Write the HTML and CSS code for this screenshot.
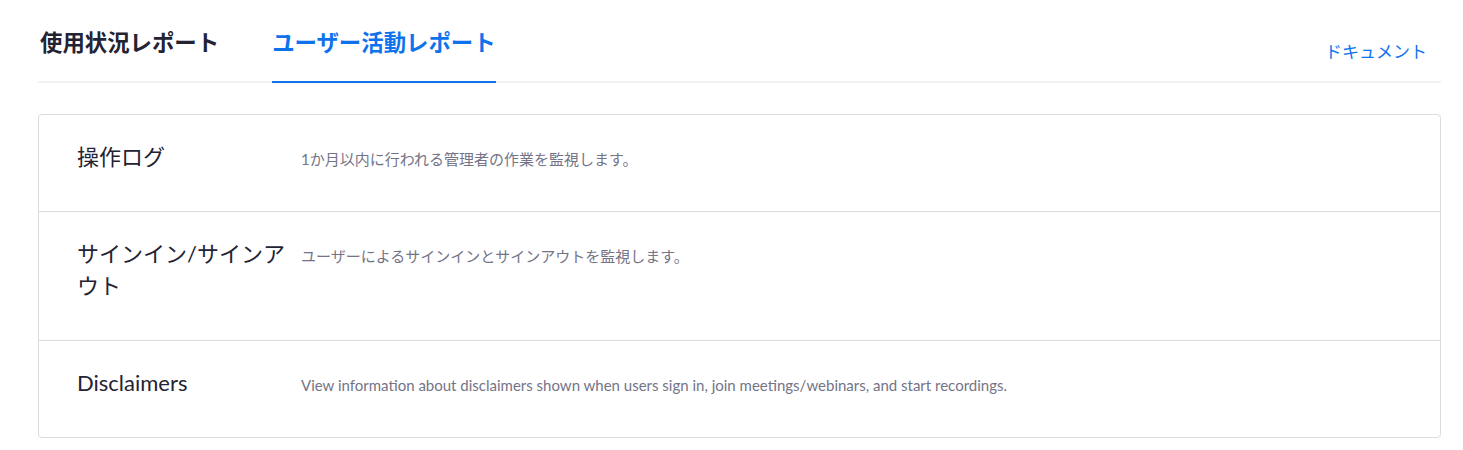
FILE: index.html
```html
<!DOCTYPE html>
<html>
<head>
    <title>ユーザー活動レポート</title>
    <link rel="stylesheet" href="styles.css">
</head>
<body>
    <div class="page">
        <div class="header">
            <div class="tabs">
                <a class="tab">使用状況レポート</a>
                <a class="tab active">ユーザー活動レポート</a>
            </div>
            <a class="doc-link">ドキュメント</a>
        </div>

        <div class="report-list">
            <div class="report-row">
                <div class="report-title">操作ログ</div>
                <div class="report-desc">1か月以内に行われる管理者の作業を監視します。</div>
            </div>
            <div class="report-row">
                <div class="report-title">サインイン/サインアウト</div>
                <div class="report-desc">ユーザーによるサインインとサインアウトを監視します。</div>
            </div>
            <div class="report-row">
                <div class="report-title">Disclaimers</div>
                <div class="report-desc">View information about disclaimers shown when users sign in, join meetings/webinars, and start recordings.</div>
            </div>
        </div>
    </div>
</body>
</html>
```

FILE: styles.css
```css
body {
    margin: 0;
    font-family: Lato, "Noto Sans CJK JP", sans-serif;
    background-color: #ffffff;
    color: #232333;
}
.page {
    padding: 0 22px 0 38px;
}
.header {
    display: flex;
    justify-content: space-between;
    align-items: flex-start;
    height: 81px;
    border-bottom: 2px solid #f2f2f2;
}
.tabs {
    display: flex;
    gap: 53px;
    padding-left: 2px;
}
.tab {
    display: block;
    padding: 27px 0 22px;
    font-size: 22.4px;
    line-height: 32px;
    font-weight: bold;
    color: #232333;
    border-bottom: 2px solid transparent;
    cursor: pointer;
}
.tab.active {
    color: #0e72ed;
    border-bottom-color: #0e72ed;
}
.doc-link {
    margin: 40px 14px 0 0;
    font-size: 17px;
    line-height: 24px;
    color: #0e72ed;
    cursor: pointer;
}
.report-list {
    margin-top: 31px;
    border: 1px solid #dcdcdc;
    border-radius: 4px;
}
.report-row {
    display: flex;
    align-items: baseline;
    padding: 26px 38px 38px;
    border-bottom: 1px solid #dcdcdc;
}
.report-row:last-child {
    border-bottom: none;
}
.report-title {
    flex: 0 0 224px;
    font-size: 22px;
    line-height: 32px;
    color: #232333;
}
.report-desc {
    font-size: 15px;
    color: #747487;
}
```
